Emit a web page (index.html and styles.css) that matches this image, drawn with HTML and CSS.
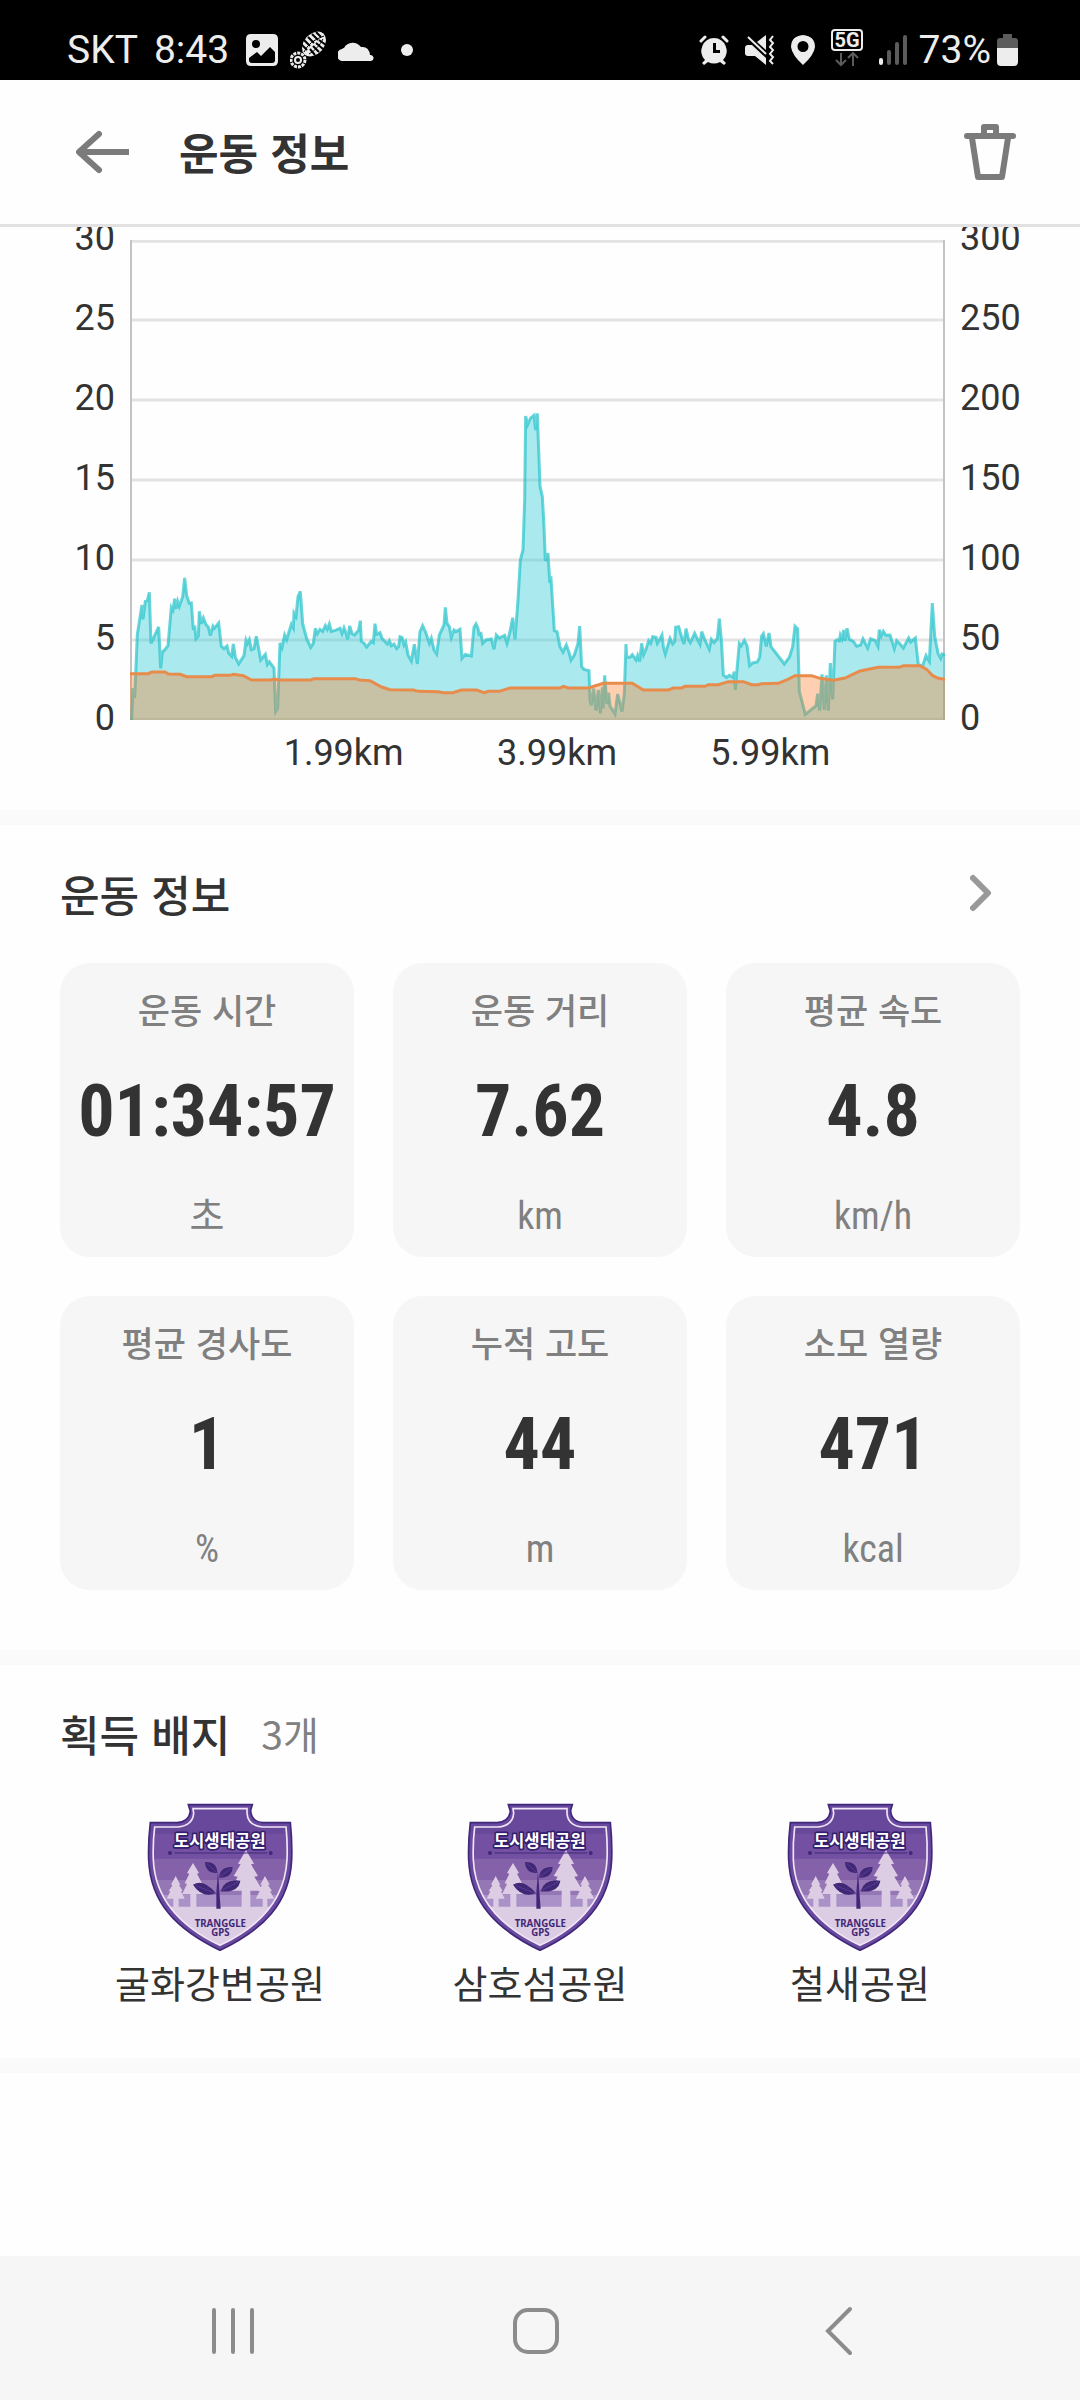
FILE: index.html
```html
<!DOCTYPE html>
<html lang="ko">
<head>
    <meta charset="UTF-8">
    <meta name="viewport" content="width=device-width, initial-scale=1.0">
    <title>운동 정보</title>
    <link rel="stylesheet" href="styles.css">
</head>
<body>
    <div class="statusbar">
        <div class="status-left">
            <span>SKT</span>
            <span class="time">8:43</span>
            <svg class="ic-photo" width="32" height="32" viewBox="0 0 32 32"><path fill="#ededed" fill-rule="evenodd" d="M5 0H27Q32 0 32 5V27Q32 32 27 32H5Q0 32 0 27V5Q0 0 5 0ZM3 24V26Q3 29 6 29H26Q29 29 29 26V18L24 13L15 22L11 18ZM10 6A4 4 0 1 0 10 14A4 4 0 1 0 10 6Z"/></svg>
            <svg class="ic-step" width="38" height="38" viewBox="0 0 38 38">
                <ellipse cx="24" cy="13" rx="10" ry="14" transform="rotate(42 24 13)" fill="#ededed"/>
                <path d="M14 21Q19 10 34 5M19 23Q28 18 33 8" fill="none" stroke="#000" stroke-width="1"/>
                <path d="M11 13L17 19M14 9L20 15M18 6L24 12M22 3L28 9M26 1L31 6M20 18L25 24M23 15L29 21M26 12L33 18M29 9L36 14" stroke="#000" stroke-width="2"/>
                <circle cx="8" cy="29" r="7" fill="none" stroke="#ededed" stroke-width="3" stroke-dasharray="3 1"/>
                <circle cx="8" cy="29" r="3" fill="none" stroke="#ededed" stroke-width="2"/>
            </svg>
            <svg class="ic-cloud" width="36" height="21" viewBox="0 0 36 21"><path fill="#ededed" d="M6 21A6 6 0 0 1 4 9Q5 8 6 8A10 10 0 0 1 23 7Q31 6 32 15A3 3 0 0 1 33 21Z"/></svg>
            <svg class="ic-dot" width="12" height="12" viewBox="0 0 12 12"><circle cx="6" cy="6" r="6" fill="#ededed"/></svg>
        </div>
        <div class="status-right">
            <svg width="30" height="30" viewBox="0 0 30 30"><path fill="#ededed" fill-rule="evenodd" d="M15 3A13 13 0 0 1 24 25L27 28L25 30L21 27Q15 30 9 27L5 30L3 28L6 25A13 13 0 0 1 15 3ZM14 8V18H21V15H17V8Z"/><path d="M2 6L6 2M28 6L24 2" stroke="#ededed" stroke-width="3" stroke-linecap="round"/></svg>
            <svg width="30" height="30" viewBox="0 0 30 30"><path fill="#ededed" d="M3 10H7L21 23V30L10 21H3Q0 21 0 18V13Q0 10 3 10ZM12 7L21 0V15Z"/><path d="M3 2L21 19" stroke="#ededed" stroke-width="2"/><path d="M28 1L25 5L28 8L25 12L28 15L25 19L28 22L25 26L28 29" fill="none" stroke="#ededed" stroke-width="2"/></svg>
            <svg width="24" height="30" viewBox="0 0 24 30"><path fill="#ededed" fill-rule="evenodd" d="M12 0Q24 1 24 12Q23 20 12 30Q1 20 0 12Q0 1 12 0ZM12 6A5 5 0 1 0 12 17A5 5 0 1 0 12 6Z"/></svg>
            <svg class="ic-5g" width="32" height="38" viewBox="0 0 32 38">
                <rect x="1" y="1" width="30" height="20" rx="3" fill="none" stroke="#ededed" stroke-width="2"/>
                <text x="16" y="18" text-anchor="middle" class="g5">5G</text>
                <path d="M10 24V36M5 31L10 36L15 31M22 37V24M17 29L22 24L27 29" fill="none" stroke="#5c5c5c" stroke-width="2"/>
            </svg>
            <svg width="28" height="30" viewBox="0 0 28 30"><path d="M2 25V28" stroke="#ededed" stroke-width="4" stroke-linecap="round"/><path d="M10 17V28M18 9V28M26 2V28" stroke="#5c5c5c" stroke-width="4" stroke-linecap="round"/></svg>
            <span class="percent">73%</span>
            <svg class="ic-battery" width="21" height="32" viewBox="0 0 21 32"><path fill="#5c5c5c" d="M6 0H15V4H18Q21 4 21 7V14H0V7Q0 4 3 4H6Z"/><path fill="#ededed" d="M0 14H21V28Q21 32 17 32H4Q0 32 0 28Z"/></svg>
        </div>
    </div>

    <header class="header">
        <button class="icon-btn" aria-label="뒤로">
            <svg width="54" height="44" viewBox="0 0 54 44"><path d="M23 4L3 22L23 40" fill="none" stroke="#7b7b7b" stroke-width="6" stroke-linecap="round" stroke-linejoin="round"/><path d="M5 22H53" stroke="#7b7b7b" stroke-width="6"/></svg>
        </button>
        <h1>운동 정보</h1>
        <button class="icon-btn" aria-label="삭제">
            <svg width="52" height="56" viewBox="0 0 52 56"><g fill="none" stroke="#7b7b7b" stroke-width="6" stroke-linejoin="round" stroke-linecap="round"><path d="M3 12H49"/><path d="M20 11V3H32V11"/><path d="M8 14L14 53H38L44 14"/></g></svg>
        </button>
    </header>

    <main>
        <section class="chart">
            <div class="y-axis left">
                <span>30</span><span>25</span><span>20</span><span>15</span><span>10</span><span>5</span><span>0</span>
            </div>
            <div class="plot">
                <svg viewBox="0 0 2445 1440" preserveAspectRatio="none">
                    <path class="grid" d="M0 4H2445M0 240H2445M0 480H2445M0 720H2445M0 960H2445M0 1200H2445M0 1438H2445"/>
                    <path class="axis" d="M0 0V1440M2445 0V1440"/>
                    <path class="speed" d="M-20 1440L5 1438 9 1344 14 1374 22 1183 36 1095 39 1138 46 1084 52 1082 58 1057 63 1210 86 1161 92 1285 97 1236 104 1230 114 1217 124 1102 129 1110 134 1076 138 1106 143 1084 148 1099 158 1070 164 1014 170 1067 178 1090 184 1089 190 1170 194 1157 198 1196 205 1188 208 1114 214 1151 220 1134 228 1154 235 1161 241 1187 249 1159 253 1165 266 1149 274 1219 282 1226 291 1218 296 1239 305 1249 310 1212 316 1252 326 1272 342 1247 348 1201 352 1211 358 1199 364 1229 372 1226 379 1189 386 1226 392 1260 406 1243 412 1273 418 1265 432 1284 437 1414 443 1404 450 1209 456 1223 464 1185 470 1199 484 1153 490 1164 492 1119 498 1129 504 1070 511 1054 518 1151 530 1196 542 1222 550 1210 556 1165 562 1181 570 1168 578 1174 586 1157 592 1168 598 1152 604 1174 616 1171 630 1165 636 1181 642 1164 648 1180 653 1198 659 1158 666 1181 674 1185 686 1170 691 1142 694 1204 702 1210 710 1221 724 1204 730 1208 735 1151 740 1183 750 1178 756 1195 772 1212 778 1202 784 1217 792 1212 800 1226 806 1220 810 1190 816 1192 822 1215 827 1206 834 1245 844 1263 853 1213 862 1272 870 1175 878 1157 888 1180 898 1210 904 1195 912 1230 920 1242 928 1185 942 1155 946 1102 951 1150 958 1160 964 1192 972 1170 978 1175 990 1168 996 1255 1006 1243 1024 1248 1032 1162 1038 1152 1044 1165 1048 1188 1052 1176 1058 1210 1068 1200 1084 1197 1092 1228 1099 1185 1108 1194 1124 1186 1131 1210 1140 1175 1148 1133 1155 1198 1164 1080 1171 960 1179 930 1184 780 1187 528 1193 554 1202 534 1212 526 1217 570 1222 520 1230 738 1237 770 1242 860 1246 963 1254 940 1259 1020 1263 1016 1273 1172 1281 1175 1290 1220 1299 1236 1309 1215 1318 1240 1323 1260 1333 1245 1344 1210 1349 1158 1355 1280 1362 1288 1377 1292 1380 1380 1384 1396 1391 1345 1398 1412 1405 1350 1411 1420 1417 1342 1419 1405 1424 1306 1431 1392 1436 1358 1440 1398 1455 1422 1463 1362 1476 1415 1483 1360 1488 1212 1490 1252 1500 1252 1507 1244 1518 1260 1523 1246 1529 1265 1535 1210 1541 1244 1548 1228 1556 1202 1562 1210 1568 1190 1578 1192 1582 1210 1588 1200 1596 1185 1600 1220 1606 1242 1620 1195 1628 1212 1634 1205 1637 1162 1646 1160 1654 1188 1662 1212 1668 1166 1676 1200 1681 1208 1694 1180 1710 1213 1715 1175 1724 1198 1738 1228 1744 1198 1752 1208 1762 1195 1768 1136 1774 1200 1780 1305 1790 1312 1798 1306 1808 1312 1813 1295 1816 1350 1820 1300 1828 1210 1834 1217 1843 1201 1851 1217 1859 1277 1868 1269 1882 1266 1889 1252 1895 1188 1900 1181 1909 1219 1917 1179 1923 1220 1963 1272 1978 1252 1988 1220 1995 1159 2003 1167 2008 1354 2026 1423 2058 1397 2063 1361 2069 1412 2076 1303 2083 1410 2089 1306 2095 1412 2101 1269 2108 1378 2115 1204 2122 1199 2128 1202 2131 1185 2136 1196 2141 1170 2145 1202 2151 1165 2158 1198 2170 1204 2180 1219 2192 1215 2199 1197 2213 1224 2222 1196 2236 1202 2244 1219 2248 1169 2254 1188 2260 1174 2268 1186 2280 1185 2286 1204 2293 1226 2300 1202 2308 1210 2320 1224 2336 1194 2342 1206 2356 1194 2365 1274 2378 1277 2388 1247 2398 1264 2407 1089 2414 1188 2424 1240 2432 1255 2436 1242 2460 1250V1440"/>
                    <path class="altitude" d="M-20 1440V1301H55L65 1296H105L115 1302 150 1303 170 1310H245L255 1306H300L310 1303 340 1307 365 1320H420L435 1317 445 1320H542L552 1316H675L688 1320 720 1322 755 1341 780 1349 850 1350 865 1354 925 1355 940 1358H968L995 1350H1040L1062 1358 1075 1354H1108L1140 1344H1290L1300 1339 1315 1344H1375L1420 1330H1507L1540 1350H1615L1630 1344H1655L1665 1339H1725L1735 1334H1765L1795 1325H1840L1865 1334H1885L1895 1331 1945 1330 1970 1320 1995 1307H2045L2070 1315 2110 1321 2145 1314 2190 1293 2245 1282 2310 1281 2322 1277H2370L2390 1288 2408 1307 2425 1315 2460 1320V1440"/>
                </svg>
                <div class="x-axis"><span>1.99km</span><span>3.99km</span><span>5.99km</span></div>
            </div>
            <div class="y-axis right">
                <span>300</span><span>250</span><span>200</span><span>150</span><span>100</span><span>50</span><span>0</span>
            </div>
        </section>

        <section class="section">
            <div class="section-head">
                <h2>운동 정보</h2>
                <button class="icon-btn more" aria-label="더보기">
                    <svg width="22" height="38" viewBox="0 0 22 38"><path d="M3 4L18 19L3 34" fill="none" stroke="#999" stroke-width="6" stroke-linecap="round" stroke-linejoin="round"/></svg>
                </button>
            </div>
            <div class="cards">
                <div class="card"><p class="label">운동 시간</p><p class="value">01:34:57</p><p class="unit">초</p></div>
                <div class="card"><p class="label">운동 거리</p><p class="value">7.62</p><p class="unit">km</p></div>
                <div class="card"><p class="label">평균 속도</p><p class="value">4.8</p><p class="unit">km/h</p></div>
                <div class="card"><p class="label">평균 경사도</p><p class="value">1</p><p class="unit">%</p></div>
                <div class="card"><p class="label">누적 고도</p><p class="value">44</p><p class="unit">m</p></div>
                <div class="card"><p class="label">소모 열량</p><p class="value">471</p><p class="unit">kcal</p></div>
            </div>
        </section>

        <section class="section badge-section">
            <div class="section-head">
                <h2>획득 배지</h2>
                <span class="count">3개</span>
            </div>
            <div class="badges">
                <figure class="badge">
                    <svg width="146" height="148" viewBox="50 70 438 444">
                        <defs>
                            <clipPath id="inner"><path d="M188 87H350V100Q352 138 396 142H467Q472 190 470 240C464 360 390 440 269 497C150 440 74 360 69 240Q67 190 73 142H142Q188 138 190 100Z"/></clipPath>
                            <g id="shield">
                                <path d="M174 75H366L361 92Q362 126 398 129H480Q486 190 484 240C478 370 400 450 269 512C140 450 60 370 55 240Q53 190 60 129H140Q176 126 180 95Z" fill="#6a4aa0" stroke="#3f2879" stroke-width="5"/>
                                <g clip-path="url(#inner)">
                                    <path fill="#68489a" d="M50 70H490V162H50Z"/>
                                    <path fill="#7350a2" d="M50 162H490V237H50Z"/>
                                    <path fill="#8561aa" d="M50 237H490V300H50Z"/>
                                    <path fill="#9677b5" d="M50 300H490V346H50Z"/>
                                    <path fill="#aa91c7" d="M50 346H490V382H50Z"/>
                                    <path fill="#dccde5" d="M50 381H490V515H50Z"/>
                                    <path fill="#dccde5" d="M136 289L150 315L146 316L157 334L152 335L163 357H145V385H129V357H109L120 335L115 334L127 316L122 315ZM188 250L206 280L200 282L215 311L209 313L227 344H198V385H180V344H155L170 313L163 311L177 282L170 280ZM347 211L371 252L362 254L383 289L372 291L397 333H360V385H334V333H300L322 291L310 289L331 254L323 252ZM404 289L418 315L413 316L425 334L419 335L432 357H411V385H397V357H376L388 335L383 334L395 316L390 315Z"/>
                                </g>
                                <path d="M188 87H350V100Q352 138 396 142H467Q472 190 470 240C464 360 390 440 269 497C150 440 74 360 69 240Q67 190 73 142H142Q188 138 190 100Z" fill="none" stroke="#efe6f5" stroke-width="5"/>
                                <path fill="#402777" d="M258 387V340L263 276L267 335L271 387ZM224 247Q260 245 261 280Q226 282 224 247ZM307 262Q305 296 266 294Q269 260 307 262ZM188 315Q220 295 257 341Q215 357 188 315ZM330 303Q324 340 270 335Q284 296 330 303Z"/>
                                <path d="M228 250L258 278M302 266L268 292M195 317L253 340M325 306L274 332" stroke="#65499a" stroke-width="2"/>
                                <path d="M132 220H410" stroke="#3f2879" stroke-width="3"/>
                                <circle cx="119" cy="220" r="6" fill="#3f2879"/><circle cx="421" cy="220" r="6" fill="#3f2879"/>
                                <text x="268" y="201" text-anchor="middle" class="badge-title">도시생태공원</text>
                                <text x="270" y="443" text-anchor="middle" class="badge-brand">TRANGGLE</text>
                                <text x="270" y="468" text-anchor="middle" class="badge-brand">GPS</text>
                            </g>
                        </defs>
                        <use href="#shield"/>
                    </svg>
                    <figcaption>굴화강변공원</figcaption>
                </figure>
                <figure class="badge">
                    <svg width="146" height="148" viewBox="50 70 438 444"><use href="#shield"/></svg>
                    <figcaption>삼호섬공원</figcaption>
                </figure>
                <figure class="badge">
                    <svg width="146" height="148" viewBox="50 70 438 444"><use href="#shield"/></svg>
                    <figcaption>철새공원</figcaption>
                </figure>
            </div>
        </section>
    </main>

    <nav class="navbar">
        <button class="icon-btn" aria-label="최근 앱"><svg width="44" height="48" viewBox="0 0 44 48"><path d="M3 3V45M22 3V45M41 3V45" stroke="#8c8c8c" stroke-width="4" stroke-linecap="round"/></svg></button>
        <button class="icon-btn" aria-label="홈"><svg width="48" height="48" viewBox="0 0 48 48"><rect x="3" y="3" width="42" height="42" rx="13" fill="none" stroke="#8c8c8c" stroke-width="4"/></svg></button>
        <button class="icon-btn" aria-label="뒤로가기"><svg width="28" height="50" viewBox="0 0 28 50"><path d="M25 3L3 25L25 47" fill="none" stroke="#8c8c8c" stroke-width="4" stroke-linecap="round"/></svg></button>
    </nav>
</body>
</html>
```
FILE: styles.css
```css
* {
    box-sizing: border-box;
    margin: 0;
    padding: 0;
}
body {
    font-family: "Noto Sans CJK KR", sans-serif;
    min-height: 100vh;
    display: flex;
    flex-direction: column;
    background: #fefefe;
    color: #333;
}
svg {
    display: block;
}
.icon-btn {
    border: none;
    background: none;
    cursor: pointer;
}

/* status bar */
.statusbar {
    height: 80px;
    padding: 20px 62px 0 67px;
    display: flex;
    justify-content: space-between;
    background: #000;
    color: #ededed;
    font-family: Roboto, sans-serif;
    font-size: 39px;
    line-height: 60px;
}
.status-left, .status-right {
    display: flex;
    align-items: center;
}
.time {
    margin-left: 16px;
}
.ic-photo {
    margin-left: 17px;
}
.ic-step {
    margin-left: 12px;
}
.ic-cloud {
    margin-left: 10px;
}
.ic-dot {
    margin-left: 27px;
}
.status-right {
    gap: 16px;
}
.ic-5g {
    margin-bottom: 4px;
}
.g5 {
    font: bold 20px Roboto, sans-serif;
    fill: #ededed;
}
.percent {
    margin-left: -4px;
}
.ic-battery {
    margin-left: -10px;
}

/* title bar */
.header {
    display: flex;
    align-items: center;
    height: 147px;
    padding: 0 64px 0 76px;
    border-bottom: 3px solid #e2e2e2;
    background: #fefefe;
}
.header h1 {
    flex: 1;
    margin-left: 49px;
    padding-bottom: 3px;
    font-size: 43px;
    line-height: 64px;
    font-weight: bold;
}

main {
    flex: 1;
    overflow: hidden;
}

/* chart, scrolled a little under the title bar */
.chart {
    display: flex;
    margin-top: -10px;
    padding-bottom: 36px;
    border-bottom: 15px solid #fafafa;
    font-family: Roboto, sans-serif;
    font-size: 36px;
    line-height: 42px;
}
.y-axis {
    display: flex;
    flex-direction: column;
    justify-content: space-between;
    height: 522px;
}
.left {
    width: 130px;
    padding-right: 15px;
    text-align: right;
}
.right {
    width: 135px;
    padding-left: 15px;
}
.plot {
    flex: 1;
    padding-top: 23px;
}
.plot svg {
    width: 100%;
    height: 480px;
}
.plot path {
    vector-effect: non-scaling-stroke;
}
.grid {
    stroke: #e3e3e3;
    stroke-width: 3px;
}
.axis {
    stroke: #c3c3c3;
    stroke-width: 4px;
}
.speed {
    fill: rgba(38, 200, 210, 0.39);
    stroke: rgba(38, 195, 203, 0.7);
    stroke-width: 3px;
}
.altitude {
    fill: rgba(254, 120, 33, 0.35);
    stroke: #e88c4c;
    stroke-width: 3px;
}
.x-axis {
    display: grid;
    grid-template-columns: repeat(3, 1fr);
    padding: 12px 68px 0 107px;
    text-align: center;
}

/* sections */
.section {
    padding: 36px 60px 60px;
    border-bottom: 15px solid #fafafa;
}
.section-head {
    display: flex;
    align-items: center;
    margin-bottom: 38px;
    line-height: 64px;
}
.section-head h2 {
    font-size: 43px;
    font-weight: 500;
}
.more {
    margin-left: auto;
    margin-right: 28px;
}
.count {
    margin-left: 31px;
    font-size: 39px;
    color: #808080;
}
.cards {
    display: grid;
    grid-template-columns: repeat(3, 1fr);
    gap: 39px;
}
.card {
    padding: 22px 0 17px;
    border-radius: 30px;
    background: #f6f6f6;
    text-align: center;
}
.label {
    font-size: 35px;
    line-height: 48px;
    font-weight: 500;
    color: #808080;
}
.value {
    margin: 39px 0 40px;
    font-family: "Liberation Sans Narrow", "Roboto Condensed", Roboto, sans-serif;
    font-size: 72px;
    line-height: 80px;
    font-weight: bold;
}
.unit {
    font-family: "Roboto Condensed", "Noto Sans CJK KR", sans-serif;
    font-size: 38px;
    line-height: 48px;
    color: #808080;
}

/* badges */
.badge-section {
    padding-bottom: 48px;
}
.badges {
    display: grid;
    grid-template-columns: repeat(3, 1fr);
}
.badge {
    text-align: center;
}
.badge svg {
    margin: 0 auto 3px;
}
.badge figcaption {
    font-size: 38px;
    line-height: 56px;
}
.badge-title {
    font: bold 50px "Noto Sans CJK KR", sans-serif;
    fill: #fff;
    stroke: #33206e;
    stroke-width: 10px;
    stroke-linejoin: round;
    paint-order: stroke;
}
.badge-brand {
    font: bold 29px "Noto Sans", sans-serif;
    fill: #402777;
}

/* system navigation */
.navbar {
    display: grid;
    grid-template-columns: repeat(3, 1fr);
    height: 144px;
    padding: 6px 90px 0 82px;
    align-items: center;
    background: #f6f6f6;
}
.navbar svg {
    margin: 0 auto;
}
```
